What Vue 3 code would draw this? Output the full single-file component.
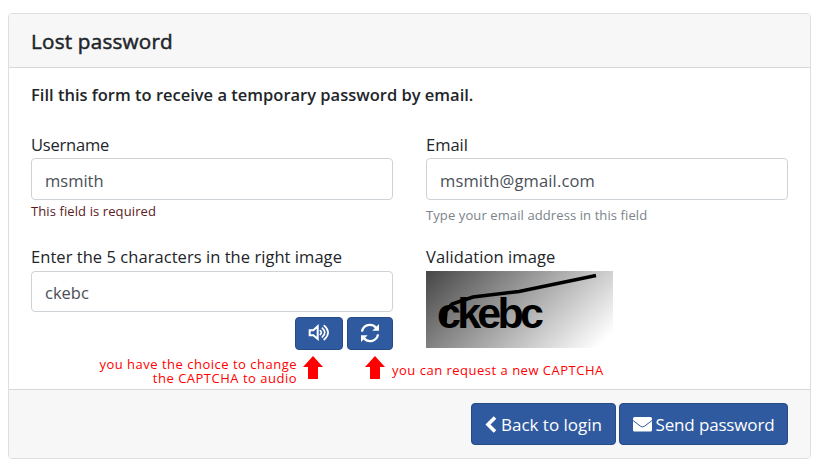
<script setup>
import { ref } from "vue";

const username = ref("msmith");
const email = ref("msmith@gmail.com");
const code = ref("ckebc");
</script>

<template>
  <form class="card" @submit.prevent>
    <header class="header">
      <h1 class="title">Lost password</h1>
    </header>

    <div class="body">
      <p class="intro">Fill this form to receive a temporary password by email.</p>

      <div class="row">
        <div class="field">
          <label class="label username" for="username">Username</label>
          <input id="username" v-model="username" class="input" type="text" />
          <small class="hint required">This field is required</small>
        </div>
        <div class="field">
          <label class="label" for="email">Email</label>
          <input id="email" v-model="email" class="input address" type="text" />
          <small class="hint muted">Type your email address in this field</small>
        </div>
      </div>

      <div class="row captcha">
        <div class="field">
          <label class="label code" for="code">Enter the 5 characters in the right image</label>
          <input id="code" v-model="code" class="input" type="text" />
          <div class="tools">
            <button class="btn small audio" type="button" aria-label="Audio">
              <svg width="22" height="18" viewBox="0 0 22 18" fill="none" stroke="#fff">
                <path d="M1.7 6.2h3.6L9.7 2.3v12.6L5.3 11.2H1.7z" stroke-width="2" />
                <path d="M12.3 6.7q2.2 1.9 0 3.8M14.3 4.2q5 4.4 0 8.8M16.2 1.7q7.8 6.9 0 13.8" stroke-width="1.7" stroke-linecap="round" />
              </svg>
            </button>
            <button class="btn small refresh" type="button" aria-label="Refresh">
              <svg width="20" height="20" viewBox="0 0 20 20">
                <path d="M2 8.7a8 8 0 0 1 14-4M18 11.3a8 8 0 0 1-14 4" fill="none" stroke="#fff" stroke-width="2.3" />
                <path d="M19 1v6.7h-6.7zM1 19v-6.7h6.7z" fill="#fff" />
              </svg>
            </button>
          </div>
        </div>
        <div class="field">
          <span class="label validation">Validation image</span>
          <svg class="picture" width="187" height="77" viewBox="0 0 187 77">
            <defs>
              <linearGradient id="shade" gradientUnits="userSpaceOnUse" x1="0" y1="0" x2="122" y2="125">
                <stop offset="0" stop-color="#464646" />
                <stop offset="1" stop-color="#fff" />
              </linearGradient>
            </defs>
            <rect width="187" height="77" fill="url(#shade)" />
            <text x="11" y="57" textLength="107">ckebc</text>
            <path d="M19 52L20 40L26 33L47 26L93 20.5L170 4.5" fill="none" stroke="#000" stroke-width="3.5" />
          </svg>
        </div>
      </div>

      <div class="notes">
        <p class="note left">you have the choice to change<br />the CAPTCHA to audio</p>
        <svg class="arrow" width="20" height="23" viewBox="0 0 20 23" fill="#f00"><path d="M10 0l10 11h-5v12H5V11H0z" /></svg>
        <svg class="arrow next" width="20" height="23" viewBox="0 0 20 23" fill="#f00"><path d="M10 0l10 11h-5v12H5V11H0z" /></svg>
        <p class="note right">you can request a new CAPTCHA</p>
      </div>
    </div>

    <footer class="footer">
      <button class="btn back" type="button">
        <svg width="12" height="17" viewBox="0 0 12 17" fill="none" stroke="#fff" stroke-width="3.6"><path d="M10 1.5L3 8.5l7 7" /></svg>
        <span>Back to login</span>
      </button>
      <button class="btn send" type="submit">
        <svg width="19" height="15" viewBox="0 0 19 15">
          <rect width="19" height="14.5" rx="1.5" fill="#fff" />
          <path d="M0 3.5l7.5 5.7q2 1.5 4 0L19 3.5" fill="none" stroke="#2f5aa0" />
        </svg>
        <span>Send password</span>
      </button>
    </footer>
  </form>
</template>

<style>
body {
  background: #fff;
}
</style>

<style scoped>
.card {
  box-sizing: border-box;
  width: 803px;
  height: 446px;
  margin: 13px 0 0 8px;
  display: flex;
  flex-direction: column;
  overflow: hidden;
  border: 1px solid #dedede;
  border-radius: 4px;
  color: #212529;
  font-family: "Open Sans", "Noto Sans", sans-serif;
  font-size: 16.5px;
}

.header {
  box-sizing: border-box;
  flex: 0 0 54px;
  padding: 12px 22px 0;
  border-bottom: 1px solid #d8d8d8;
  background: #f7f7f7;
}

.title,
.intro,
.note {
  margin: 0;
}

.title {
  font-size: 20.7px;
  font-weight: 400;
  letter-spacing: 0.2px;
  line-height: 30px;
  -webkit-text-stroke: 0.5px #212529;
}

.body {
  flex: 1;
  padding: 0 22px;
}

.intro {
  padding-top: 15px;
  font-weight: 600;
  line-height: 24px;
}

.row {
  display: grid;
  grid-template-columns: 362px 362px;
  column-gap: 33px;
  height: 113px;
  padding-top: 25px;
  box-sizing: border-box;
}

.row.captcha {
  padding-top: 24px;
}

.field {
  display: flex;
  flex-direction: column;
  align-items: flex-start;
}

.label {
  height: 26px;
  line-height: 26px;
  white-space: nowrap;
}

.username {
  letter-spacing: -0.2px;
}

.code {
  letter-spacing: 0.05px;
}

.validation {
  letter-spacing: 0.1px;
}

.captcha .label {
  height: 27px;
}

.input {
  box-sizing: border-box;
  flex: none;
  width: 100%;
  height: 42px;
  padding: 3px 13px 0;
  border: 1px solid #cdd2d7;
  border-radius: 4px;
  color: #495057;
  font: inherit;
}

.address {
  letter-spacing: 0.15px;
}

.captcha .input {
  height: 41px;
  padding-top: 2px;
}

.hint {
  font-size: 13px;
  letter-spacing: 0.1px;
  line-height: 18px;
  padding-top: 2px;
}

.required {
  color: #5a1a22;
}

.muted {
  padding-top: 6px;
  color: #7b838a;
}

.tools {
  display: flex;
  align-self: flex-end;
  gap: 4px;
  margin-top: 5px;
}

.btn {
  box-sizing: border-box;
  display: flex;
  align-items: center;
  justify-content: center;
  height: 42px;
  padding: 0;
  border: 1px solid #264b87;
  border-radius: 4px;
  background: #2f5aa0;
  color: #fff;
  font: inherit;
  font-size: 17px;
  white-space: nowrap;
}

.small {
  width: 46px;
  height: 33px;
}

.audio {
  width: 48px;
}

.small svg {
  margin-bottom: 2px;
}

.picture text {
  font: bold 43px "Liberation Sans", Arial, sans-serif;
}

.notes {
  display: flex;
  align-items: flex-start;
  padding-top: 23px;
}

.note {
  color: #f00;
  font-size: 13px;
  letter-spacing: 0.5px;
  line-height: 14px;
  white-space: nowrap;
}

.left {
  width: 266px;
  padding-top: 1px;
  text-align: right;
}

.arrow {
  margin-left: 6px;
}

.arrow.next {
  margin-left: 42px;
}

.right {
  padding: 7px 0 0 7px;
}

.footer {
  box-sizing: border-box;
  flex: 0 0 69px;
  display: flex;
  justify-content: flex-end;
  gap: 3px;
  padding: 13px 22px 0;
  border-top: 1px solid #d8d8d8;
  background: #f7f7f7;
}

.back {
  width: 145px;
  gap: 4px;
}

.send {
  width: 169px;
  gap: 4px;
}

.send span {
  letter-spacing: -0.15px;
}
</style>
